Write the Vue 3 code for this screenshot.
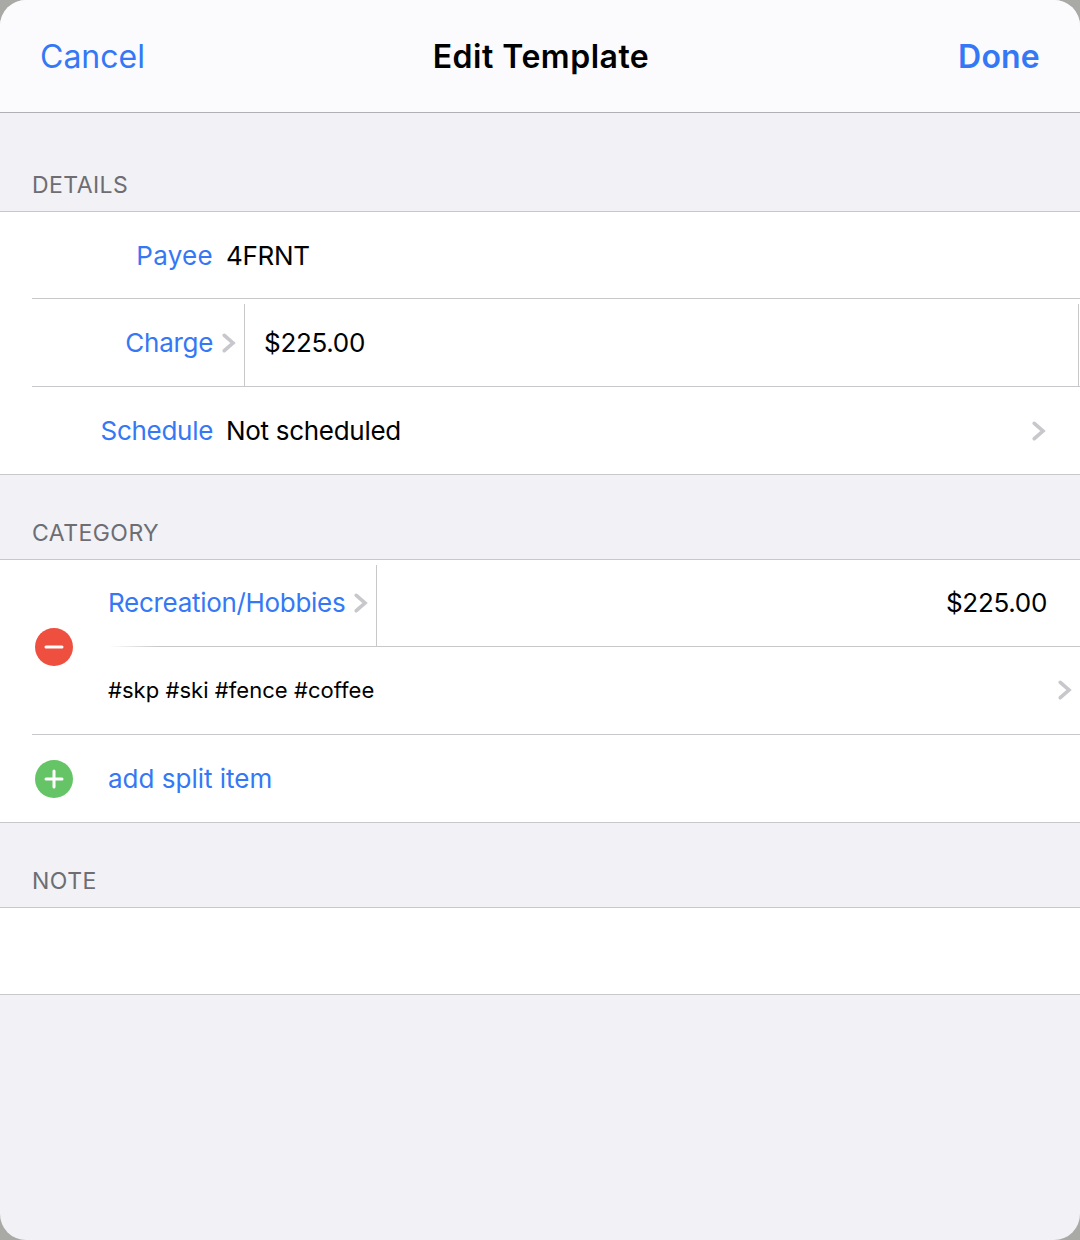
<script setup>
const detailRows = [
  { id: 'payee', label: 'Payee', value: '4FRNT' },
  { id: 'schedule', label: 'Schedule', value: 'Not scheduled' }
]
</script>

<template>
  <div class="page">
    <div class="sheet">
      <header class="nav">
        <span class="nav-btn">Cancel</span>
        <span class="nav-title">Edit Template</span>
        <span class="nav-btn done">Done</span>
      </header>

      <div class="section-head first">DETAILS</div>
      <section class="group">
        <div class="row inset">
          <span class="label label-payee">{{ detailRows[0].label }}</span>
          <span class="value">{{ detailRows[0].value }}</span>
        </div>
        <div class="row tall inset">
          <span class="label">Charge</span>
          <svg class="chev chev-label" viewBox="0 0 14 20"><path d="M2.3 2.3 L11 10 L2.3 17.7" /></svg>
          <div class="cell-amount">$225.00</div>
        </div>
        <div class="row tall pad">
          <span class="label">{{ detailRows[1].label }}</span>
          <span class="value grow">{{ detailRows[1].value }}</span>
          <svg class="chev chev-end" viewBox="0 0 14 20"><path d="M2.3 2.3 L11 10 L2.3 17.7" /></svg>
        </div>
      </section>

      <div class="section-head">CATEGORY</div>
      <section class="group">
        <div class="split inset">
          <div class="split-icon">
            <svg class="round" viewBox="0 0 38 38">
              <circle cx="19" cy="19" r="19" fill="#ee4f3e" />
              <rect x="9.5" y="17.5" width="19" height="3" rx="1.5" fill="#fff" />
            </svg>
          </div>
          <div class="split-body">
            <div class="split-top">
              <span class="cat">Recreation/Hobbies</span>
              <svg class="chev chev-cat" viewBox="0 0 14 20"><path d="M2.3 2.3 L11 10 L2.3 17.7" /></svg>
              <div class="cat-amount">$225.00</div>
            </div>
            <div class="split-tags">
              <span class="tags">#skp #ski #fence #coffee</span>
              <svg class="chev" viewBox="0 0 14 20"><path d="M2.3 2.3 L11 10 L2.3 17.7" /></svg>
            </div>
          </div>
        </div>
        <div class="row tall pad">
          <div class="split-icon">
            <svg class="round" viewBox="0 0 38 38">
              <circle cx="19" cy="19" r="19" fill="#65c466" />
              <rect x="9.5" y="17.5" width="19" height="3" rx="1.5" fill="#fff" />
              <rect x="17.5" y="9.5" width="3" height="19" rx="1.5" fill="#fff" />
            </svg>
          </div>
          <span class="add-text">add split item</span>
        </div>
      </section>

      <div class="section-head">NOTE</div>
      <section class="group">
        <div class="row"></div>
      </section>
    </div>
  </div>
</template>

<style>
html, body {
  margin: 0;
  background: #a9a9a6;
}
</style>

<style scoped>
.page {
  width: 1080px;
  height: 1240px;
  background: #a9a9a6;
  font-family: Inter, "Liberation Sans", sans-serif;
}
.sheet {
  height: 1240px;
  background: #f1f1f6;
  border-radius: 26px;
  overflow: hidden;
}
.nav {
  height: 112px;
  background: #fbfbfe;
  border-bottom: 1px solid #b1b1b4;
  display: flex;
  align-items: center;
  padding: 0 40px;
}
.nav-btn {
  flex: 1;
  font-size: 32px;
  color: #3478f6;
}
.done {
  font-weight: 600;
  letter-spacing: 0.2px;
  text-align: right;
}
.nav-title {
  margin-left: 2px;
  font-size: 32px;
  font-weight: 600;
  color: #000;
  letter-spacing: 0.5px;
}
.section-head {
  height: 84px;
  box-sizing: border-box;
  padding: 44px 0 0 32px;
  font-size: 23px;
  line-height: 28px;
  letter-spacing: 0.45px;
  color: #6d6d72;
}
.section-head.first {
  height: 98px;
  padding-top: 58px;
}
.group {
  background: #fff;
  border-top: 1px solid #c8c8cb;
  border-bottom: 1px solid #c8c8cb;
}
.row {
  height: 86px;
  display: flex;
  align-items: center;
}
.tall {
  height: 87px;
}
.pad {
  padding-left: 32px;
}
.inset {
  border-bottom: 1px solid #c8c8cb;
  margin-left: 32px;
}
.label {
  width: 181px;
  flex: none;
  text-align: right;
  font-size: 26px;
  letter-spacing: -0.3px;
  color: #3478f6;
}
.label-payee {
  letter-spacing: 0.3px;
}
.value {
  margin-left: 13px;
  font-size: 26px;
  letter-spacing: -0.3px;
  color: #000;
}
.grow {
  flex: 1;
}
.chev {
  width: 14px;
  height: 20px;
  flex: none;
  fill: none;
  stroke: #c7c7cc;
  stroke-width: 3.6;
  stroke-linecap: round;
}
.chev-label {
  margin-left: 9px;
}
.chev-end {
  margin-right: 34px;
}
.cell-amount {
  margin-left: 8px;
  margin-right: 1px;
  align-self: flex-end;
  height: 82px;
  flex: 1;
  box-sizing: border-box;
  border-left: 1px solid #c8c8cb;
  border-right: 1px solid #c8c8cb;
  padding: 0 0 5px 19px;
  display: flex;
  align-items: center;
  font-size: 26px;
  letter-spacing: -0.3px;
}
.split {
  display: flex;
}
.split-icon {
  width: 76px;
  flex: none;
  display: flex;
  align-items: center;
}
.round {
  width: 38px;
  height: 38px;
  margin-left: 3px;
}
.split-body {
  flex: 1;
}
.split-top {
  height: 87px;
  display: flex;
  align-items: center;
  padding-bottom: 2px;
  box-sizing: border-box;
  position: relative;
}
/* hairline under the category fades in from the left */
.split-top::after {
  content: "";
  position: absolute;
  left: 0;
  right: 0;
  bottom: 0;
  height: 1px;
  background: linear-gradient(to right, #fff, #c8c8cb 50px);
}
.cat {
  font-size: 26px;
  letter-spacing: -0.3px;
  color: #3478f6;
}
.chev-cat {
  margin-left: 9px;
}
.cat-amount {
  flex: 1;
  margin-left: 8px;
  margin-bottom: -2px;
  align-self: flex-end;
  height: 82px;
  box-sizing: border-box;
  border-left: 1px solid #c8c8cb;
  display: flex;
  align-items: center;
  justify-content: flex-end;
  padding: 0 33px 7px 0;
  font-size: 26px;
  letter-spacing: -0.3px;
  color: #000;
}
.split-tags {
  height: 87px;
  display: flex;
  align-items: center;
  justify-content: space-between;
  padding: 0 8px 2px 0;
  box-sizing: border-box;
}
.tags {
  font-size: 22px;
  letter-spacing: 0.04px;
  color: #000;
}
.add-text {
  font-size: 26px;
  color: #3478f6;
}
</style>
